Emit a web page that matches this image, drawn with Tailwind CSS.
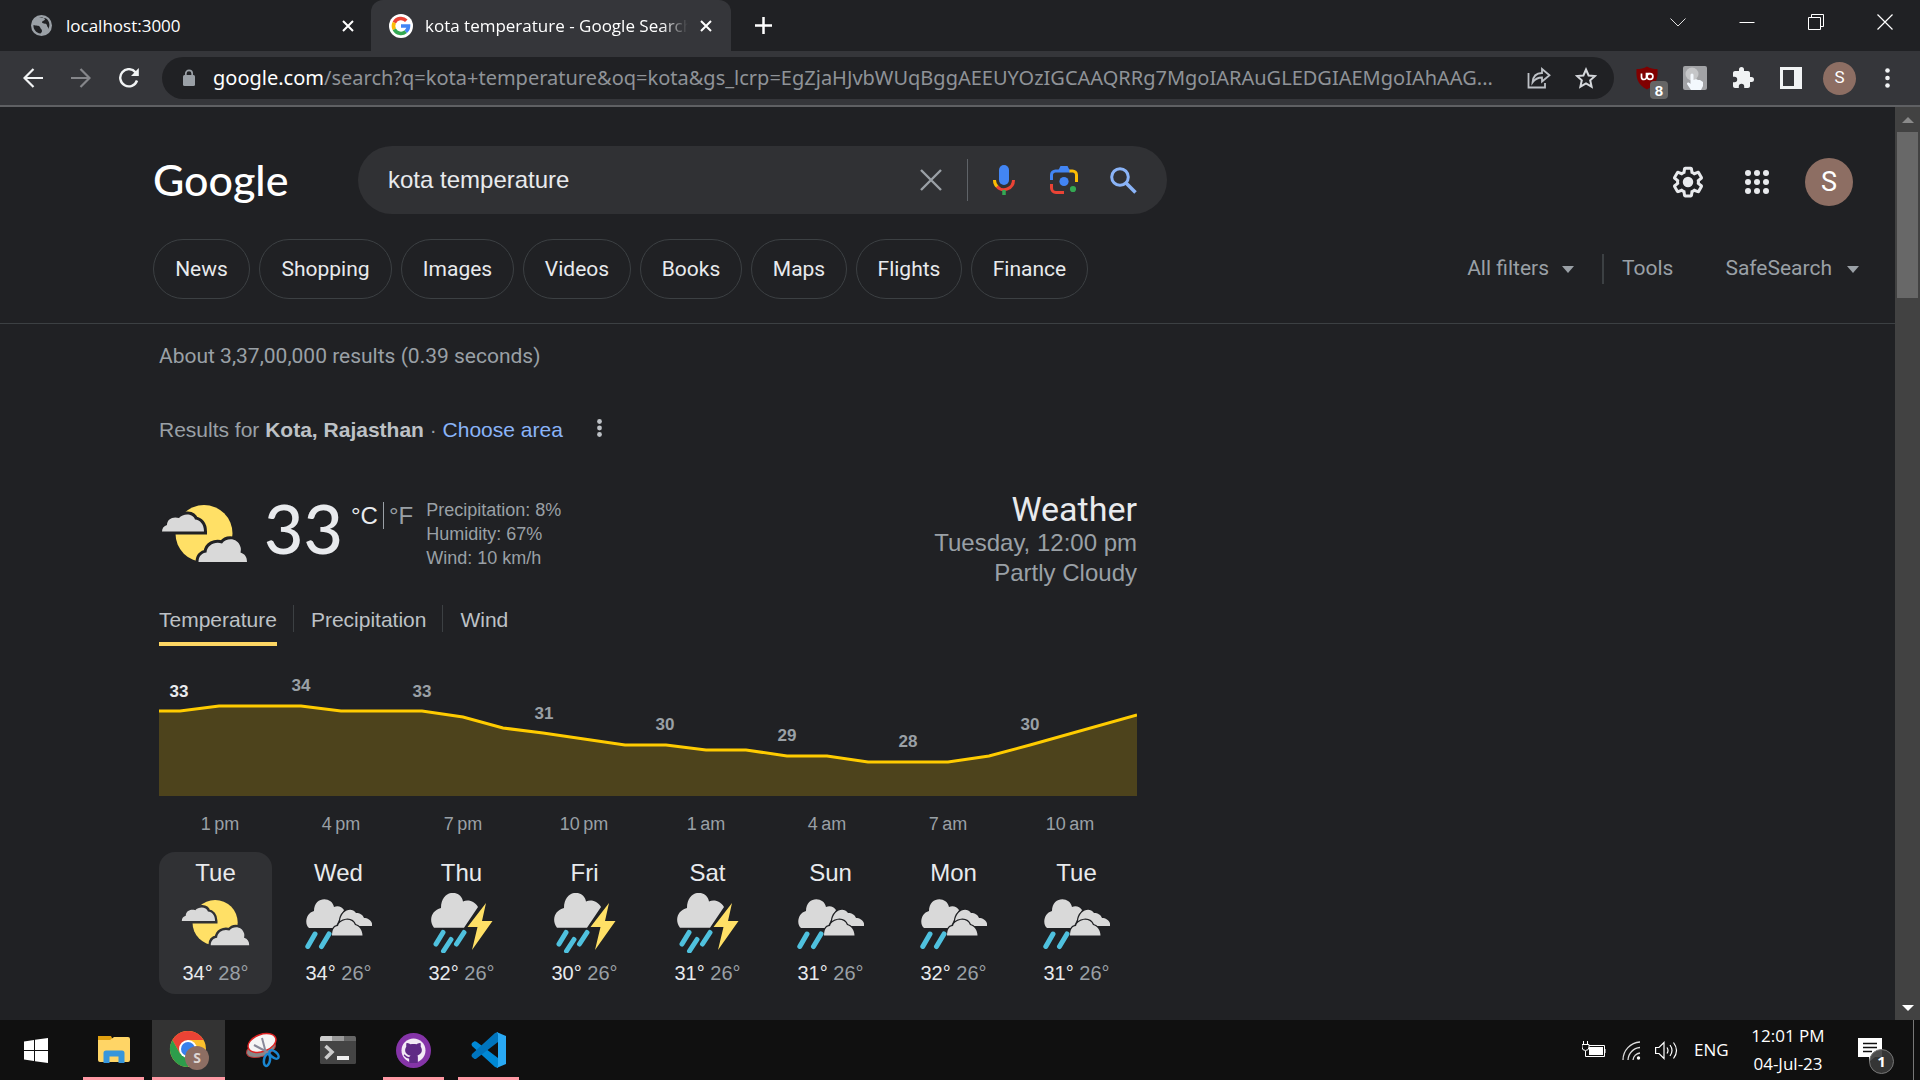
<!DOCTYPE html>
<html lang="en">
<head>
<meta charset="utf-8">
<title>kota temperature - Google Search</title>
<script src="https://cdn.jsdelivr.net/npm/@tailwindcss/browser@4"></script>
</head>
<body class="flex min-h-screen flex-col bg-[#202124] font-['Liberation_Sans',Arial,sans-serif] text-[#e8eaed]">

<svg class="hidden" aria-hidden="true">
  <symbol id="partly" viewBox="0 0 87 60">
    <circle cx="43" cy="29.500" r="28.500" fill="#ffe066"/>
    <g fill="#d9d9d9" stroke="currentColor" stroke-width="6" paint-order="stroke">
      <path d="M1 27.500C1 24 3 22 6 21C6 15 12 12 18 14C22 9 32 9 34 15.500C39 16 43 20 43 27.500Z"/>
      <path d="M37.500 58C37.500 52 41 49 45.500 48.500C46 41 54 37 61 39.500C66 33 77 34 79.500 43C80 45 80 46 79.500 48.500C84 50 86 53 86 58Z"/>
    </g>
  </symbol>
  <symbol id="rain" viewBox="0 0 67 60">
    <g fill="#d9d9d9" stroke="currentColor" stroke-width="2.500" paint-order="stroke">
      <path d="M4 35C-1 31 1 20 9 18C9 3 27 3 29 14C33 12 37 14 39 17L30 35Z"/>
      <path d="M35 28C36 18 46 13 51 20C55 20 58 22 59 25C63 25 68 28 67 33H50Z"/>
      <path d="M27 42.500C27 37 29 33 33 33C35 26 47 24 50 32C54 33 57.500 37 57.500 42.500Z"/>
    </g>
    <path d="M10 41L2.800 53.500M24 41L16.500 53.500" stroke="#4fc1de" stroke-width="5" stroke-linecap="round"/>
  </symbol>
  <symbol id="storm" viewBox="0 0 62 60">
    <path d="M3 34.700C-3 27 1 17 10 15C10 -4 30 -4 32 8.500C38 6 44 9 47 14L33 34.700Z" fill="#d9d9d9"/>
    <path d="M55 10L36.500 34H46.500L41 57L61.500 28H51Z" fill="#ffe066"/>
    <path d="M12 39.500L5 51M20 46.500L12.500 58M33 39.500L25.500 51" stroke="#4fc1de" stroke-width="5" stroke-linecap="round"/>
  </symbol>
  <symbol id="x" viewBox="0 0 12 12"><path d="M1 1L11 11M11 1L1 11" stroke="currentColor" stroke-width="2" fill="none"/></symbol>
</svg>

<!-- Tab strip -->
<div class="flex h-[51px] items-center font-['Open_Sans','Noto_Sans',sans-serif] text-[17px] text-white">
  <div class="flex h-full w-[371px] shrink-0 items-center pr-[17px] pl-[31px]">
    <svg class="mr-[14px] h-[21px] w-[21px]" viewBox="0 0 21 21"><circle cx="10.500" cy="10.500" r="10.500" fill="#9aa0a6"/><path d="M2.500 10C5 11 8 10 9 12C9.500 14 11 14 11 16C11 17 10 18 9.500 18.500C5 18 2 14 2.500 10ZM8 3C10 2 13 2.500 14 4C14 6 11 5.500 11 7.500C12 9 16 8 16 10.500C16 12 18 12 17 14.500C20 10 18 4 13.500 3Z" fill="#202124"/></svg>
    <span class="flex-1">localhost:3000</span>
    <button aria-label="Close tab"><svg class="h-3 w-3"><use href="#x"/></svg></button>
  </div>
  <div class="flex h-full w-[360px] shrink-0 items-center rounded-t-xl bg-[#35363a] pr-[19px] pl-[18px]">
    <svg class="mr-3 h-6 w-6" viewBox="0 0 24 24"><circle cx="12" cy="12" r="12" fill="#fff"/><g fill="none" stroke-width="3.600"><path d="M5.300 8.600A7.500 7.500 0 0 1 17.300 6.700" stroke="#ea4335"/><path d="M5.300 8.600A7.500 7.500 0 0 0 5.300 15.400" stroke="#fbbc05"/><path d="M5.300 15.400A7.500 7.500 0 0 0 16.800 17.700" stroke="#34a853"/><path d="M16.800 17.700A7.500 7.500 0 0 0 19.500 12H12" stroke="#4285f4"/></g></svg>
    <span class="flex-1 overflow-hidden whitespace-nowrap [mask-image:linear-gradient(90deg,#000_90%,transparent)]">kota temperature - Google Search</span>
    <button aria-label="Close tab" class="ml-3"><svg class="h-3 w-3"><use href="#x"/></svg></button>
  </div>
  <button aria-label="New tab" class="ml-6"><svg class="h-[17px] w-[17px]" viewBox="0 0 17 17" stroke="#fff" stroke-width="2.500"><path d="M8.500 0V17M0 8.500H17"/></svg></button>
  <div class="mb-2 ml-auto flex gap-[53px] pr-[27px]">
    <button aria-label="Search tabs"><svg class="h-4 w-4" viewBox="0 0 16 16" fill="none" stroke="#e0e0e0"><path d="M.5 4.500L8 12L15.500 4.500"/></svg></button>
    <button aria-label="Minimise"><svg class="h-4 w-4" viewBox="0 0 16 16" stroke="#fff"><path d="M.5 8.500H15.500"/></svg></button>
    <button aria-label="Restore"><svg class="h-4 w-4" viewBox="0 0 16 16" fill="none" stroke="#fff"><path d="M.5 3.500H12.500V15.500H.5ZM3.500 3V.5H15.500V12.500H13"/></svg></button>
    <button aria-label="Close"><svg class="h-4 w-4" viewBox="0 0 16 16" stroke="#fff" stroke-width="1.200"><path d="M.5 .5L15.500 15.500M15.500 .5L.5 15.500"/></svg></button>
  </div>
</div>

<!-- Toolbar -->
<div class="flex h-14 items-center border-b-2 border-[#5f6063] bg-[#35363a] pl-[23px]">
  <div class="flex w-[139px] shrink-0 gap-[28px]">
    <button aria-label="Back"><svg class="h-5 w-5" viewBox="0 0 20 20" fill="none" stroke="#f1f3f4" stroke-width="2.200"><path d="M20 10H2M10.500 1L1.500 10L10.500 19"/></svg></button>
    <button aria-label="Forward"><svg class="h-5 w-5" viewBox="0 0 20 20" fill="none" stroke="#85868a" stroke-width="2.200"><path d="M0 10H18M9.500 1L18.500 10L9.500 19"/></svg></button>
    <button aria-label="Reload"><svg class="h-5 w-5" viewBox="0 0 20 20" fill="none" stroke="#f1f3f4" stroke-width="2.400"><path d="M18 12.500A8.600 8.600 0 1 1 16.500 4.300"/><path d="M19.800 0V8H12Z" fill="#f1f3f4" stroke="none"/></svg></button>
  </div>
  <div class="flex h-[42px] min-w-0 flex-1 items-center rounded-full bg-[#202124] pr-[17px] pl-[21px]">
    <svg class="mr-[18px] h-[18px] w-3 shrink-0" viewBox="0 0 12 18"><rect y="6" width="12" height="11" rx="1.500" fill="#9aa0a6"/><path d="M2.800 7V4.500A3.200 3.200 0 0 1 9.200 4.500V7" fill="none" stroke="#9aa0a6" stroke-width="1.700"/></svg>
    <span class="min-w-0 flex-1 truncate font-['Noto_Sans','Open_Sans',sans-serif] text-[20px] text-[#8f9398]"><span class="text-white">google.com</span>/search?q=kota+temperature&amp;oq=kota&amp;gs_lcrp=EgZjaHJvbWUqBggAEEUYOzIGCAAQRRg7MgoIARAuGLEDGIAEMgoIAhAAG...</span>
    <button aria-label="Share" class="ml-2"><svg class="h-[22px] w-6" viewBox="0 0 24 22" fill="none" stroke="#bdc1c6" stroke-width="1.800"><path d="M1.500 6V20.500H18V16"/><path d="M5.500 15.500C6 9 10 6 15 6V2L22.500 8.300L15 14.500V10.500C11 10.500 8 12 5.500 15.500Z"/></svg></button>
    <button aria-label="Bookmark" class="ml-6"><svg class="h-[22px] w-[22px]" viewBox="0 0 22 22" fill="none" stroke="#d5d8dc" stroke-width="2"><path d="M11 2.500L13.600 8.500L20 9L15.200 13.300L16.600 19.600L11 16.300L5.400 19.600L6.800 13.300L2 9L8.400 8.500Z"/></svg></button>
  </div>
  <div class="flex w-[306px] shrink-0 items-center pl-[22px]">
    <button aria-label="uBlock" class="relative"><svg class="h-6 w-6" viewBox="0 0 24 24"><path d="M11 .5C8 2.500 4 3 .5 3C0 12 1 18 11 23.500C21 18 22 12 21.500 3C18 3 14 2.500 11 .5Z" fill="#800000"/><path d="M5.500 7.500V11A2.500 2.500 0 0 0 10.500 11V7.500H13.500" fill="none" stroke="#fff" stroke-width="1.700"/><circle cx="14" cy="10.500" r="2.900" fill="none" stroke="#fff" stroke-width="1.700"/></svg><span class="absolute top-[15px] left-[14px] h-[18px] w-[18px] rounded-sm bg-[#666] text-center text-[15px] leading-[19px] font-bold text-white">8</span></button>
    <button aria-label="Clicker" class="ml-[23px]"><svg class="h-6 w-6" viewBox="0 0 24 24"><rect width="24" height="24" rx="2" fill="#a2a3a6"/><circle cx="9" cy="8" r="6.500" fill="#c5c6c8"/><path d="M7.500 9A1.500 1.500 0 0 1 10.500 9V14L13 13L15 14L17 14L20 16V20L18 24H8L4 18C4 16 6 16 7.500 18Z" fill="#f3f8fd"/></svg></button>
    <button aria-label="Extensions" class="ml-6"><svg class="h-6 w-6" viewBox="0 0 24 24" fill="#f1f3f4"><path d="M20.500 11H19V7c0-1.100-.9-2-2-2h-4V3.500a2.500 2.500 0 0 0-5 0V5H4c-1.100 0-2 .9-2 2v3.800h1.500a2.700 2.700 0 0 1 0 5.400H2V20c0 1.100.9 2 2 2h3.800v-1.500a2.700 2.700 0 0 1 5.400 0V22H17c1.100 0 2-.9 2-2v-4h1.500a2.500 2.500 0 0 0 0-5z"/></svg></button>
    <button aria-label="Side panel" class="ml-[25px]"><svg class="h-[22px] w-[22px]" viewBox="0 0 22 22"><path d="M0 0H22V22H0ZM3 3V19H14V3Z" fill="#f1f3f4" fill-rule="evenodd"/></svg></button>
    <button aria-label="Profile" class="ml-[21px] h-[33px] w-[33px] rounded-full bg-[#8d6e63] font-[Roboto,sans-serif] text-[17px] text-white">S</button>
    <button aria-label="Menu" class="ml-[29px]"><svg class="h-5 w-[5px]" viewBox="0 0 5 20" fill="#f1f3f4"><circle cx="2.500" cy="2.500" r="2.300"/><circle cx="2.500" cy="10" r="2.300"/><circle cx="2.500" cy="17.500" r="2.300"/></svg></button>
  </div>
</div>

<!-- Page and scrollbar -->
<div class="flex flex-1">
  <main class="min-w-0 flex-1">
    <header class="border-b border-[#3c4043] pt-[39px] pb-6 pl-[153px]">
      <div class="flex h-[68px] items-center">
        <a href="#" class="w-[205px] shrink-0 font-[Lato,sans-serif] text-[43px] leading-[44px] font-medium text-white">Google</a>
        <form class="flex h-[68px] w-[809px] items-center rounded-full bg-[#303134] pr-[30px] pl-[30px]">
          <input aria-label="Search" value="kota temperature" class="min-w-0 flex-1 bg-transparent text-[24px] text-[#e8eaed] outline-none">
          <button type="button" aria-label="Clear" class="text-[#9aa0a6]"><svg class="h-[22px] w-[22px]" viewBox="0 0 22 22" stroke="currentColor" stroke-width="2.400"><path d="M1 1L21 21M21 1L1 21"/></svg></button>
          <span class="mx-[25px] h-[42px] w-px bg-[#5f6368]"></span>
          <button type="button" aria-label="Voice search"><svg class="h-[30px] w-[22px]" viewBox="0 0 22 30" fill="none"><rect x="6" width="10" height="20" rx="5" fill="#4285f4"/><path d="M1.500 15A9.500 9.500 0 0 0 4.500 22" stroke="#fbbc04" stroke-width="3"/><path d="M4 21.500A9.500 9.500 0 0 0 20.500 15" stroke="#ea4335" stroke-width="3"/><path d="M11 25V30" stroke="#34a853" stroke-width="3.500"/></svg></button>
          <button type="button" aria-label="Image search" class="ml-[35px]"><svg class="h-7 w-7" viewBox="0 0 28 28" fill="none" stroke-width="3"><path d="M1.500 14V9A4 4 0 0 1 5.500 5H20" stroke="#4285f4"/><path d="M8 5L10.500 0H17.500L20 5Z" fill="#4285f4"/><path d="M19.500 5H22.500A4 4 0 0 1 26.500 9V16" stroke="#fbbc04"/><path d="M1.500 18V22A4.500 4.500 0 0 0 6 26.500H14" stroke="#ea4335"/><circle cx="14" cy="15.500" r="4.600" fill="#4285f4"/><circle cx="23" cy="23" r="3.100" fill="#34a853"/></svg></button>
          <button aria-label="Search" class="ml-8"><svg class="h-[27px] w-[27px]" viewBox="0 0 27 27" fill="none" stroke="#8ab4f8" stroke-width="3"><circle cx="10" cy="10" r="8.300"/><path d="M16 16L25.500 25.500" stroke-width="3.500"/></svg></button>
        </form>
        <div class="ml-auto flex items-center pt-1 pr-[42px]">
          <button aria-label="Settings"><svg class="h-9 w-9" viewBox="0 0 24 24" fill="#e8eaed"><path d="M13.850 22.250h-3.700c-.74 0-1.360-.54-1.450-1.270l-.27-1.890c-.27-.14-.53-.29-.79-.46l-1.800.72c-.7.260-1.470-.030-1.810-.65L2.200 15.530c-.35-.66-.2-1.440.36-1.880l1.530-1.190c-.010-.15-.020-.3-.020-.46 0-.15.010-.31.020-.46l-1.520-1.190c-.59-.45-.74-1.260-.37-1.880l1.850-3.190c.34-.62 1.110-.9 1.790-.63l1.810.73c.26-.17.520-.32.780-.46l.27-1.910c.090-.7.710-1.250 1.440-1.250h3.700c.74 0 1.360.54 1.450 1.270l.27 1.890c.27.140.53.290.79.460l1.800-.72c.71-.26 1.480.030 1.820.65l1.840 3.180c.36.660.2 1.440-.36 1.880l-1.520 1.190c.010.15.020.3.020.46s-.010.310-.020.460l1.520 1.190c.56.450.72 1.230.37 1.860l-1.860 3.220c-.34.620-1.110.9-1.800.630l-1.800-.72c-.26.170-.52.320-.78.460l-.27 1.910c-.1.680-.72 1.220-1.460 1.220zm-3.230-2h2.760l.37-2.550.53-.22c.44-.18.88-.44 1.340-.78l.45-.34 2.380.96 1.380-2.400-2.030-1.580.07-.56c.030-.26.060-.51.060-.78s-.030-.53-.06-.78l-.07-.56 2.030-1.580-1.390-2.400-2.390.96-.45-.35c-.42-.32-.87-.58-1.330-.77l-.52-.22-.37-2.550h-2.760l-.37 2.550-.53.210c-.44.190-.88.440-1.340.790l-.45.330-2.380-.95-1.390 2.390 2.030 1.580-.07.560a7 7 0 0 0-.06.790c0 .26.020.53.060.78l.07.560-2.030 1.580 1.380 2.400 2.390-.96.450.350c.43.330.86.580 1.330.770l.53.220z"/><circle cx="12" cy="12" r="3.500"/></svg></button>
          <button aria-label="Apps" class="ml-[39px]"><svg class="h-6 w-6" viewBox="0 0 24 24" fill="#e8eaed"><circle cx="3" cy="3" r="3"/><circle cx="12" cy="3" r="3"/><circle cx="21" cy="3" r="3"/><circle cx="3" cy="12" r="3"/><circle cx="12" cy="12" r="3"/><circle cx="21" cy="12" r="3"/><circle cx="3" cy="21" r="3"/><circle cx="12" cy="21" r="3"/><circle cx="21" cy="21" r="3"/></svg></button>
          <button aria-label="Account" class="ml-9 h-12 w-12 rounded-full bg-[#8d6e63] font-[Roboto,sans-serif] text-[27px] text-white">S</button>
        </div>
      </div>
      <div class="mt-[25px] flex items-center font-[Roboto,'Open_Sans',sans-serif] text-[21px]">
        <nav class="flex gap-[9px] text-center leading-[58px]">
          <a href="#" class="w-[97px] rounded-full border border-[#3c4043]">News</a>
          <a href="#" class="w-[133px] rounded-full border border-[#3c4043]">Shopping</a>
          <a href="#" class="w-[113px] rounded-full border border-[#3c4043]">Images</a>
          <a href="#" class="w-[108px] rounded-full border border-[#3c4043]">Videos</a>
          <a href="#" class="w-[102px] rounded-full border border-[#3c4043]">Books</a>
          <a href="#" class="w-[96px] rounded-full border border-[#3c4043]">Maps</a>
          <a href="#" class="w-[106px] rounded-full border border-[#3c4043]">Flights</a>
          <a href="#" class="w-[117px] rounded-full border border-[#3c4043]">Finance</a>
        </nav>
        <div class="ml-auto flex items-center pr-9 text-[#9aa0a6]">
          <button class="flex items-center gap-[13px]">All filters <svg class="h-[7px] w-3" viewBox="0 0 12 7" fill="currentColor"><path d="M0 0H12L6 7Z"/></svg></button>
          <span class="mr-[18px] ml-7 h-[30px] w-[2px] bg-[#3c4043]"></span>
          <button class="mr-[52px]">Tools</button>
          <button class="flex items-center gap-[15px]">SafeSearch <svg class="h-[7px] w-3" viewBox="0 0 12 7" fill="currentColor"><path d="M0 0H12L6 7Z"/></svg></button>
        </div>
      </div>
    </header>

    <section class="ml-[159px] w-[978px] pt-[18px]">
      <p class="font-[Roboto,'Open_Sans',sans-serif] text-[21px] leading-7 text-[#9aa0a6]">About 3,37,00,000 results (0.39 seconds)</p>
      <div class="mt-[46px] flex items-center text-[21px] leading-7 text-[#9aa0a6]">
        <p>Results for <b class="text-[#bdc1c6]">Kota, Rajasthan</b> · <a href="#" class="text-[#8ab4f8]">Choose area</a></p>
        <button aria-label="More" class="mb-1 ml-[34px]"><svg class="h-[18px] w-[5px]" viewBox="0 0 5 18" fill="#bdc1c6"><circle cx="2.500" cy="2.500" r="2.400"/><circle cx="2.500" cy="9" r="2.400"/><circle cx="2.500" cy="15.500" r="2.400"/></svg></button>
      </div>

      <div class="mt-[46px] flex h-[104px] items-start">
        <svg class="mt-[14px] ml-[2px] h-[60px] w-[87px] text-[#202124]"><use href="#partly"/></svg>
        <span class="mt-[2px] ml-[16px] w-[87px] font-[Lato,sans-serif] text-[68px] leading-[72px] font-medium">33</span>
        <div class="mt-3 flex h-[27px] items-center text-[24px]">
          <button>°C</button><span class="mx-[5px] h-full w-px bg-[#9aa0a6]"></span><button class="text-[#9aa0a6]">°F</button>
        </div>
        <div class="mt-2 ml-[13px] text-[18px] leading-6 text-[#9aa0a6]"><p>Precipitation: 8%</p><p>Humidity: 67%</p><p>Wind: 10 km/h</p></div>
        <div class="ml-auto text-right text-[24px] leading-[30px] text-[#9aa0a6]">
          <h2 class="font-[Roboto,sans-serif] text-[34px] leading-[38px] text-[#e8eaed]">Weather</h2>
          <p>Tuesday, 12:00 pm</p><p>Partly Cloudy</p>
        </div>
      </div>

      <div class="mt-[11px] flex h-[41px] items-start text-[21px] leading-[30px] text-[#bdc1c6]">
        <button class="h-[41px] border-b-4 border-[#fdd663] pb-[7px]">Temperature</button>
        <span class="mr-[17px] ml-4 h-[27px] w-px bg-[#3c4043]"></span>
        <button>Precipitation</button>
        <span class="mr-[17px] ml-4 h-[27px] w-px bg-[#3c4043]"></span>
        <button>Wind</button>
      </div>

      <svg class="mt-6 h-[170px] w-full" viewBox="0 0 978 170" text-anchor="middle">
        <path d="M0 41H21L60 36H142L182 41H263L304 47L344 58L384 63L425 69L466 75H507L547 80H587L628 86H668L709 92H789L830 86L871 75L978 45V126H0Z" fill="#4d431c"/>
        <path d="M0 41H21L60 36H142L182 41H263L304 47L344 58L384 63L425 69L466 75H507L547 80H587L628 86H668L709 92H789L830 86L871 75L978 45" fill="none" stroke="#fc0" stroke-width="3"/>
        <g fill="#9aa0a6" font-size="17" font-weight="bold">
          <text x="20" y="27" fill="#e8eaed">33</text><text x="142" y="21">34</text><text x="263" y="27">33</text><text x="385" y="49">31</text><text x="506" y="60">30</text><text x="628" y="71">29</text><text x="749" y="77">28</text><text x="871" y="60">30</text>
        </g>
        <g fill="#9aa0a6" font-size="18">
          <text x="61" y="160">1&#8201;pm</text><text x="182" y="160">4&#8201;pm</text><text x="304" y="160">7&#8201;pm</text><text x="425" y="160">10&#8201;pm</text><text x="547" y="160">1&#8201;am</text><text x="668" y="160">4&#8201;am</text><text x="789" y="160">7&#8201;am</text><text x="911" y="160">10&#8201;am</text>
        </g>
      </svg>

      <div class="mt-3 flex gap-[10px] text-center text-[24px] leading-[30px] text-[#202124]">
        <div class="flex w-[113px] flex-col items-center rounded-2xl bg-[#303134] py-[6px] text-[#303134]"><span class="text-[#e8eaed]">Tue</span><svg class="my-[5px] h-[60px] w-[69px]"><use href="#partly"/></svg><span class="text-[20px] text-[#9aa0a6]"><span class="text-[#e8eaed]">34°</span> 28°</span></div>
        <div class="flex w-[113px] flex-col items-center py-[6px]"><span class="text-[#e8eaed]">Wed</span><svg class="my-[5px] h-[60px] w-[67px]"><use href="#rain"/></svg><span class="text-[20px] text-[#9aa0a6]"><span class="text-[#e8eaed]">34°</span> 26°</span></div>
        <div class="flex w-[113px] flex-col items-center py-[6px]"><span class="text-[#e8eaed]">Thu</span><svg class="my-[5px] h-[60px] w-[62px]"><use href="#storm"/></svg><span class="text-[20px] text-[#9aa0a6]"><span class="text-[#e8eaed]">32°</span> 26°</span></div>
        <div class="flex w-[113px] flex-col items-center py-[6px]"><span class="text-[#e8eaed]">Fri</span><svg class="my-[5px] h-[60px] w-[62px]"><use href="#storm"/></svg><span class="text-[20px] text-[#9aa0a6]"><span class="text-[#e8eaed]">30°</span> 26°</span></div>
        <div class="flex w-[113px] flex-col items-center py-[6px]"><span class="text-[#e8eaed]">Sat</span><svg class="my-[5px] h-[60px] w-[62px]"><use href="#storm"/></svg><span class="text-[20px] text-[#9aa0a6]"><span class="text-[#e8eaed]">31°</span> 26°</span></div>
        <div class="flex w-[113px] flex-col items-center py-[6px]"><span class="text-[#e8eaed]">Sun</span><svg class="my-[5px] h-[60px] w-[67px]"><use href="#rain"/></svg><span class="text-[20px] text-[#9aa0a6]"><span class="text-[#e8eaed]">31°</span> 26°</span></div>
        <div class="flex w-[113px] flex-col items-center py-[6px]"><span class="text-[#e8eaed]">Mon</span><svg class="my-[5px] h-[60px] w-[67px]"><use href="#rain"/></svg><span class="text-[20px] text-[#9aa0a6]"><span class="text-[#e8eaed]">32°</span> 26°</span></div>
        <div class="flex w-[113px] flex-col items-center py-[6px]"><span class="text-[#e8eaed]">Tue</span><svg class="my-[5px] h-[60px] w-[67px]"><use href="#rain"/></svg><span class="text-[20px] text-[#9aa0a6]"><span class="text-[#e8eaed]">31°</span> 26°</span></div>
      </div>
    </section>
  </main>
  <div class="flex w-[25px] shrink-0 flex-col items-center bg-[#424242]" aria-hidden="true">
    <svg class="mt-[10px] mb-[9px] h-[6px] w-3" viewBox="0 0 12 6" fill="#8a8a8a"><path d="M0 6L6 0L12 6Z"/></svg>
    <div class="h-[166px] w-[21px] bg-[#686868]"></div>
    <svg class="mt-auto mb-[9px] h-[6px] w-3" viewBox="0 0 12 6" fill="#fff"><path d="M0 0L6 6L12 0Z"/></svg>
  </div>
</div>

<!-- Taskbar -->
<footer class="flex h-[60px] items-center bg-[#101010] font-['Open_Sans','Noto_Sans',sans-serif] text-white">
  <button aria-label="Start" class="flex w-[83px] shrink-0 pl-6"><svg class="h-[25px] w-6" viewBox="0 0 24 25" fill="#fff"><path d="M0 3.500L10 2V12H0ZM11 1.800L24 0V12H11ZM0 13H10V23L0 21.500ZM11 13H24V25L11 23.200Z"/></svg></button>
  <button aria-label="File Explorer" class="flex h-full w-[61px] items-center justify-center border-b-[3px] border-[#ff99a4] pt-[3px]"><svg class="h-7 w-8" viewBox="0 0 32 28"><path d="M0 0H13L15 4H0Z" fill="#e0a010"/><path d="M0 4H12L16 1H30A2 2 0 0 1 32 3V24A2 2 0 0 1 30 26H2A2 2 0 0 1 0 24Z" fill="#ffd566"/><path d="M5.500 27V17A2.500 2.500 0 0 1 8 14.500H24A2.500 2.500 0 0 1 26.500 17V27H20.500V20.500H11.500V27Z" fill="#3796dc"/></svg></button>
  <button aria-label="Chrome" class="ml-2 flex h-full w-[73px] items-center justify-center border-b-[3px] border-[#ff99a4] bg-[#333] pt-[3px]"><svg class="h-10 w-10" viewBox="0 0 40 40"><circle cx="19" cy="19" r="18" fill="#fbc02d"/><path d="M3.400 10A18 18 0 0 1 34.600 10H19L11 23.500Z" fill="#ea4335"/><path d="M3.400 10A18 18 0 0 0 19 37L27 23.500L11 23.500Z" fill="#2d9d4b"/><circle cx="19" cy="19" r="9" fill="#fff"/><circle cx="19" cy="19" r="7" fill="#3880ec"/><circle cx="28" cy="28" r="12" fill="#8d6e63"/><text x="28" y="33" font-size="14" font-weight="bold" text-anchor="middle" fill="#ddd5d2">S</text></svg></button>
  <button aria-label="Snipping Tool" class="ml-5"><svg class="h-9 w-9" viewBox="0 0 36 36" fill="none"><ellipse cx="16" cy="17" rx="15" ry="7.500" transform="rotate(-18 16 17)" fill="#888" stroke="#b33" stroke-width="1"/><ellipse cx="17" cy="11" rx="14.500" ry="8.500" transform="rotate(-20 17 11)" fill="#f5f5f5" stroke="#d22" stroke-width="1.500"/><path d="M17 6L21 21M9 13L24 21" stroke="#889" stroke-width="2"/><ellipse cx="22" cy="28" rx="3" ry="6" transform="rotate(10 22 28)" stroke="#1986d1" stroke-width="2.500"/><ellipse cx="29" cy="22.500" rx="3" ry="5.500" transform="rotate(-50 29 22.500)" stroke="#1986d1" stroke-width="2.500"/></svg></button>
  <button aria-label="Terminal" class="ml-[39px]"><svg class="h-7 w-9" viewBox="0 0 36 28"><rect width="36" height="28" rx="1.500" fill="#444"/><path d="M0 5V1.500L1.500 0H12V5Z" fill="#ccc"/><path d="M12 0H24V5H12Z" fill="#999"/><path d="M24 0H34.500L36 1.500V5H24Z" fill="#666"/><path d="M5.500 10L12 16L5.500 22.500" fill="none" stroke="#ccc" stroke-width="3.500"/><rect x="17" y="20" width="12" height="4" fill="#f0f0f0"/></svg></button>
  <button aria-label="GitHub Desktop" class="ml-[27px] flex h-full w-[61px] items-center justify-center border-b-[3px] border-[#ff99a4] pt-[3px]"><svg class="h-[35px] w-[35px]" viewBox="0 0 35 35"><circle cx="17.500" cy="17.500" r="17.500" fill="#8534a8"/><circle cx="17.500" cy="17.500" r="12" fill="#f2eaf5"/><path d="M14 29V24.500C10 25.500 9.500 22.500 8 22M21 29V23.500C21 22 20.500 21.500 20.500 21.500" fill="none" stroke="#6a2c91" stroke-width="1.500"/><path d="M10.500 10C12 9.500 14 11 14.500 11.300C16.500 10.800 18.500 10.800 20.500 11.300C21 11 23 9.500 24.500 10C25 12 24.700 13 24.700 13.500C27.500 18 25 22 20.500 22.500C21 23 21.500 24 21.500 25V30H13.500V25C13.500 24 14 23 14.500 22.500C10 22 7.500 18 10.300 13.500C10.300 13 10 12 10.500 10Z" fill="#5f2a85"/></svg></button>
  <button aria-label="VS Code" class="ml-[14px] flex h-full w-[61px] items-center justify-center border-b-[3px] border-[#ff99a4] pt-[3px]"><svg class="h-9 w-9" viewBox="0 0 36 36"><path d="M1 11L3.500 9.300Q4.500 9 5.500 9.800L27 26V36L24 35L1 14Q0 12 1 11Z" fill="#0089d6"/><path d="M1 25L3.500 27Q4.500 27.300 5.500 26.500L27 10V0L24 1L1 22Q0 24 1 25Z" fill="#0074bd"/><path d="M25.500 0L35 4V32L25.500 36Q27 35 27 33V3Q27 1 25.500 0Z" fill="#29a9f4"/></svg></button>
  <div class="ml-auto flex items-center">
    <svg class="h-[18px] w-6" viewBox="0 0 24 18" fill="none" stroke="#fff"><path d="M7 4.500H22.500V15.500H3.500V10M24 8V12"/><rect x="7" y="6" width="14" height="8" fill="#fff" stroke="none"/><path d="M1.500 0V3M5.500 0V3M0 3.500H7V6A3.500 3.500 0 0 1 0 6Z" fill="#101010"/></svg>
    <svg class="ml-4 h-[19px] w-[19px]" viewBox="0 0 19 19" fill="none" stroke="#ddd" stroke-width="1.300"><path d="M1 19A18 18 0 0 1 18 1M6 19A13 13 0 0 1 18 6.500M11 19A8 8 0 0 1 18 12"/><circle cx="16.500" cy="17" r="1.700" fill="#fff" stroke="none"/></svg>
    <svg class="ml-[14px] h-[19px] w-[23px]" viewBox="0 0 23 19" fill="none" stroke="#fff" stroke-width="1.200"><path d="M.6 6.500H4L9 1.500V17.500L4 12.500H.6ZM12 6.500Q14 9.500 12 12.500M15 4Q19 9.500 15 15M18.500 1.500Q24.500 9.500 18.500 17.500"/></svg>
    <span class="ml-4 w-[34px] text-[17px]">ENG</span>
    <div class="ml-[22px] w-[76px] text-center text-[17px] leading-7 whitespace-nowrap"><p>12:01 PM</p><p>04-Jul-23</p></div>
    <button aria-label="Notifications" class="relative ml-8"><svg class="h-6 w-6" viewBox="0 0 24 24"><path d="M0 0H24V19H17L11 24V19H0Z" fill="#fff"/><path d="M5 5.500H19M5 9.500H19M5 13.500H14" stroke="#101010" stroke-width="1.300"/></svg><span class="absolute top-[11px] left-[11px] h-[25px] w-[25px] rounded-full border border-[#777] bg-[#3a3a3a]/90 text-center text-[15px] leading-[23px] font-bold">1</span></button>
  </div>
  <span class="mr-[6px] ml-[31px] h-full w-px bg-[#777]"></span>
</footer>
</body>
</html>
